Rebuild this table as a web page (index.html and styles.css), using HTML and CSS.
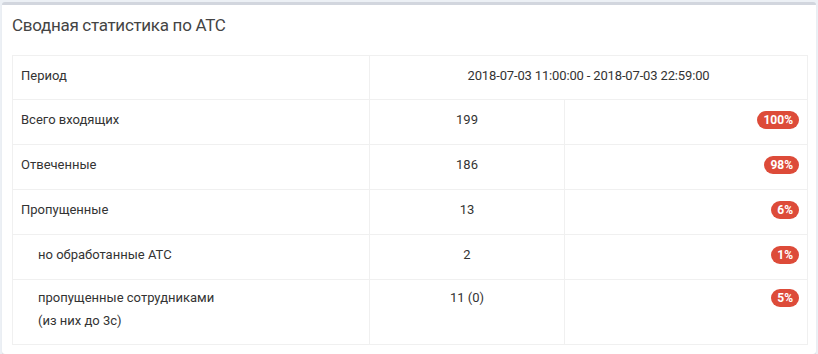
FILE: index.html
```html
<!DOCTYPE html>
<html lang="ru">
<head>
<meta charset="utf-8">
<link rel="stylesheet" href="styles.css">
</head>
<body>
<div class="box">
  <div class="box-header"><h3 class="box-title">Сводная статистика по АТС</h3></div>
  <div class="box-body">
    <table class="stats">
      <colgroup><col class="c1"><col class="c2"><col class="c3"></colgroup>
      <tr>
        <td>Период</td>
        <td colspan="2" class="center date">2018-07-03 11:00:00 - 2018-07-03 22:59:00</td>
      </tr>
      <tr>
        <td>Всего входящих</td>
        <td class="center">199</td>
        <td class="right"><span class="badge">100%</span></td>
      </tr>
      <tr>
        <td>Отвеченные</td>
        <td class="center">186</td>
        <td class="right"><span class="badge">98%</span></td>
      </tr>
      <tr>
        <td>Пропущенные</td>
        <td class="center">13</td>
        <td class="right"><span class="badge">6%</span></td>
      </tr>
      <tr>
        <td class="indent">но обработанные АТС</td>
        <td class="center">2</td>
        <td class="right"><span class="badge">1%</span></td>
      </tr>
      <tr class="tall">
        <td class="indent">пропущенные сотрудниками<br>(из них до 3с)</td>
        <td class="center">11 (0)</td>
        <td class="right"><span class="badge">5%</span></td>
      </tr>
    </table>
  </div>
</div>
</body>
</html>
```

FILE: styles.css
```css
html, body {
  margin: 0;
  padding: 0;
  background: #ecf0f5;
}
body {
  padding: 2px 2px 0 2px;
  font-family: Roboto, "Liberation Sans", sans-serif;
  font-size: 13px;
  line-height: 20px;
  color: #333;
}
.box {
  background: #fff;
  border-top: 3px solid #d2d6de;
  border-radius: 3px;
  box-shadow: 0 1px 1px rgba(0,0,0,0.1);
  height: 349px;
}
.box-header {
  padding: 10px 10px 10px 10px;
}
.box-title {
  margin: 0;
  font-size: 17px;
  font-weight: 400;
  line-height: 20px;
  letter-spacing: -0.3px;
  color: #444;
}
.box-body {
  padding: 10px 9px 10px 10px;
}
.stats {
  width: 795px;
  table-layout: fixed;
  border-collapse: collapse;
  border: 1px solid #f4f4f4;
}
.c1 { width: 357px; }
.c2 { width: 195px; }
.c3 { width: 243px; }
.stats td {
  border: 1px solid #f0f0f0;
  padding: 10px 8px 14px 8px;
  vertical-align: top;
}
.stats tr:first-child td {
  padding-top: 10px;
  padding-bottom: 13px;
}
.stats td.center { text-align: center; }
.stats td.right { text-align: right; }
.stats td.indent { padding-left: 25px; }
.stats td.date { letter-spacing: -0.15px; }
.stats tr.tall td {
  padding-top: 6px;
  padding-bottom: 12px;
  line-height: 23px;
}
.badge {
  display: inline-block;
  background: #dd4b39;
  color: #fff;
  font-size: 12px;
  font-weight: 700;
  line-height: 12px;
  padding: 3px 6px;
  border-radius: 10px;
  vertical-align: 0;
}
```
